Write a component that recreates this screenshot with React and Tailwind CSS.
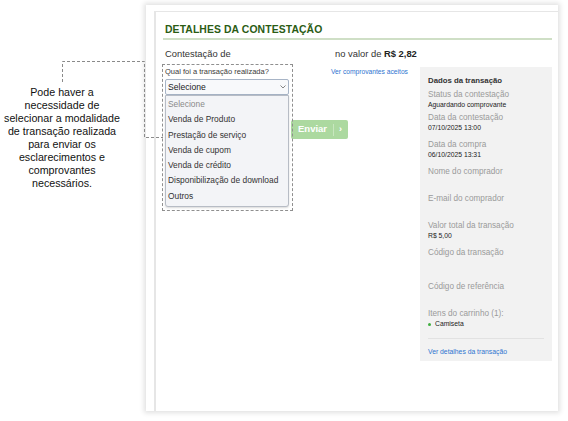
import React from "react";

const opcoes = [
  "Selecione",
  "Venda de Produto",
  "Prestação de serviço",
  "Venda de cupom",
  "Venda de crédito",
  "Disponibilização de download",
  "Outros",
];

const Campo = ({ label, value, className = "" }) => (
  <div className={className}>
    <div className="text-[8.2px] leading-[10px] text-[#9a9a9a]">{label}</div>
    {value && <div className="text-[6.8px] leading-[10px] text-[#222]">{value}</div>}
  </div>
);

const App = () => {
  return (
    <div
      className="relative w-[568px] h-[421px] bg-white overflow-hidden flex items-start"
      style={{ fontFamily: '"Liberation Sans", Arial, sans-serif' }}
    >
      {/* linha tracejada da anotação */}
      <svg className="absolute left-0 top-0 pointer-events-none" width="170" height="150">
        <path
          d="M62.5 82 V61.5 H144.5 V137.5 H163"
          fill="none"
          stroke="#8a8a8a"
          strokeWidth="1"
          strokeDasharray="3 2"
        />
      </svg>

      {/* anotação */}
      <div className="w-[146px] shrink-0 pt-[86px] pl-[2px] pr-[24px]">
        <p className="text-[10.7px] leading-[13px] text-[#111] text-center">
          Pode haver a necessidade de selecionar a modalidade de transação realizada para enviar os esclarecimentos e comprovantes necessários.
        </p>
      </div>

      {/* card */}
      <div className="mt-[5px] w-[412px] h-[406px] bg-white shadow-[0_0_5px_2px_rgba(0,0,0,0.12)] pl-[8px] pt-[6px] flex">
        <div className="flex-1 border-l-2 border-t border-[#e6e6e6] pl-[9px] pt-[11px] pr-[6px]">
          <h2 className="text-[10.4px] leading-[14px] font-bold text-[#2b5c14] tracking-[0.1px]">
            DETALHES DA CONTESTAÇÃO
          </h2>
          <div className="-ml-[2px] mt-[1px] h-[2px] bg-[#cfdfc6]" />

          <div className="flex mt-[8px] text-[9.4px] leading-[12px] text-[#333]">
            <span className="w-[170px]">Contestação de</span>
            <span>
              no valor de <b className="text-[#222]">R$ 2,82</b>
            </span>
          </div>

          <div className="flex mt-[4px]">
            <div className="relative w-[255px] shrink-0">
              {/* botão enviar, parcialmente atrás da caixa tracejada */}
              <button
                type="button"
                className="absolute left-[126px] top-[56px] h-[19px] w-[57px] rounded-[2px] bg-[#acd9a0] flex items-center text-white"
              >
                <span className="pl-[7px] w-[42px] text-left text-[9.5px] font-bold">Enviar</span>
                <span className="h-[12px] w-px bg-[#c8e7bf]" />
                <span className="pl-[5px] text-[9px] font-bold">›</span>
              </button>

              <div className="flex items-start">
                <div className="relative -ml-[3px] w-[131px] h-[147px] border border-dashed border-[#8f8f8f] pl-[2px] pt-[2px]">
                  <div className="text-[7.5px] leading-[10px] text-[#3a3a3a]">Qual foi a transação realizada?</div>
                  <div className="mt-[2px] w-[124px] h-[16px] border border-[#a7b4c6] rounded-[2px] bg-[#f8f9fb] flex items-center justify-between px-[2px]">
                    <span className="text-[8.6px] text-[#222]">Selecione</span>
                    <svg width="6" height="4" viewBox="0 0 6 4">
                      <path d="M0.5 0.5 L3 3 L5.5 0.5" fill="none" stroke="#777" strokeWidth="0.9" />
                    </svg>
                  </div>
                  <ul className="w-[124px] h-[112px] border border-[#b7bcc5] rounded-b-[3px] bg-[#f3f4f7] shadow-[0_1px_2px_rgba(0,0,0,0.15)] pt-[1px]">
                    {opcoes.map((op, i) => (
                      <li
                        key={op}
                        className={[
                          "h-[15.3px] leading-[15.3px] pl-[2px] text-[8.4px]",
                          i === 0 ? "text-[#8a8a8a]" : "text-[#333]",
                        ].join(" ")}
                      >
                        {op}
                      </li>
                    ))}
                  </ul>
                </div>
                <a className="ml-[38px] mt-[3px] text-[6.7px] text-[#2f74d0] whitespace-nowrap">
                  Ver comprovantes aceitos
                </a>
              </div>
            </div>

            {/* dados da transação */}
            <div className="ml-auto mt-[3px] w-[132px] h-[294px] bg-[#f2f2f2] pl-[8px] pr-[8px] pt-[9px]">
              <div className="text-[7.8px] leading-[10px] font-bold text-[#333]">Dados da transação</div>
              <Campo className="mt-[4px]" label="Status da contestação" value="Aguardando comprovante" />
              <Campo className="mt-[3px]" label="Data da contestação" value="07/10/2025 13:00" />
              <Campo className="mt-[7px]" label="Data da compra" value="06/10/2025 13:31" />
              <Campo className="mt-[7px] h-[27px]" label="Nome do comprador" />
              <Campo className="h-[27px]" label="E-mail do comprador" />
              <Campo label="Valor total da transação" value="R$ 5,00" />
              <Campo className="mt-[7px] h-[34px]" label="Código da transação" />
              <Campo className="h-[27px]" label="Código de referência" />
              <div>
                <div className="text-[8.2px] leading-[10px] text-[#9a9a9a]">Itens do carrinho (1):</div>
                <div className="flex items-center text-[6.8px] leading-[10px] text-[#222]">
                  <span className="inline-block w-[3px] h-[3px] rounded-full bg-[#3fae3f] mr-[4px]" />
                  Camiseta
                </div>
              </div>
              <div className="mt-[9px] h-px bg-[#e2e2e2]" />
              <a className="block mt-[8px] text-[6.8px] text-[#2f74d0]">Ver detalhes da transação</a>
            </div>
          </div>
        </div>
      </div>
    </div>
  );
};

export default App;
